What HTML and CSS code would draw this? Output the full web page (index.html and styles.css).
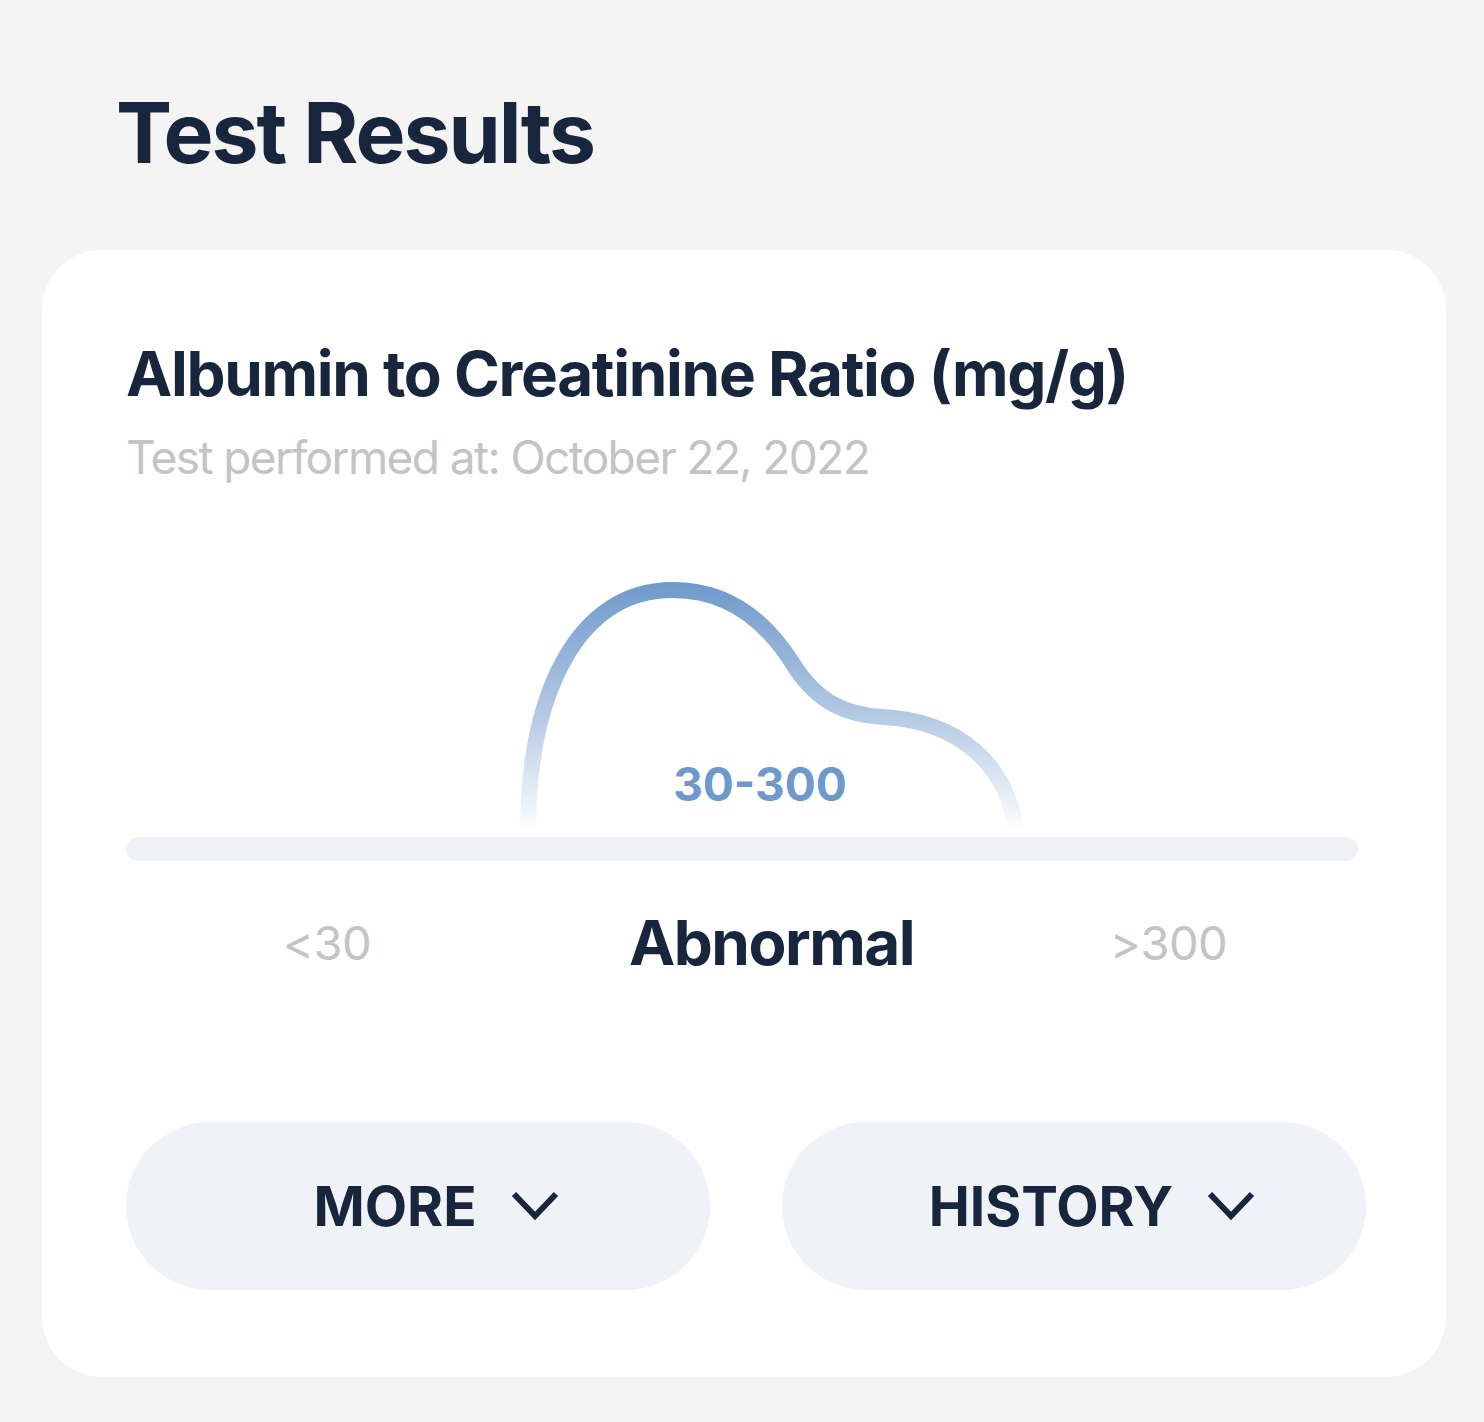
FILE: index.html
```html
<!DOCTYPE html>
<html lang="en">
<head>
    <meta charset="UTF-8">
    <meta name="viewport" content="width=device-width, initial-scale=1.0">
    <link rel="stylesheet" href="styles.css">
</head>
<body>
    <h1 class="page-title">Test Results</h1>

    <section class="result-card">
        <h2 class="test-name">Albumin to Creatinine Ratio (mg/g)</h2>
        <p class="test-date">Test performed at: October 22, 2022</p>

        <div class="gauge">
            <!-- range curve over the track, fades out towards the bottom -->
            <svg class="gauge-curve" width="1232" height="263" viewBox="0 0 1232 263">
                <defs>
                    <linearGradient id="curve-fade" gradientUnits="userSpaceOnUse" x1="0" y1="8" x2="0" y2="258">
                        <stop offset="0" stop-color="#6f99cb"/>
                        <stop offset="0.55" stop-color="#b6cbe5"/>
                        <stop offset="1" stop-color="#ffffff"/>
                    </linearGradient>
                </defs>
                <path d="M402 258 C402 118 452 16 547 16 C604 16 642 50 667 90 C692 130 722 141 757 143 C832 147 882 190 890 258"
                      fill="none" stroke="url(#curve-fade)" stroke-width="16"/>
                <text class="gauge-range" x="634" y="227" text-anchor="middle">30-300</text>
            </svg>
            <div class="gauge-track"></div>
            <div class="gauge-labels">
                <span>&lt;30</span>
                <span class="current">Abnormal</span>
                <span>&gt;300</span>
            </div>
        </div>

        <div class="actions">
            <button class="pill-button">
                MORE
                <svg width="48" height="30" viewBox="0 0 48 30"><path d="M3 3 L24 25 L45 3" fill="none" stroke="#18263d" stroke-width="6"/></svg>
            </button>
            <button class="pill-button">
                HISTORY
                <svg width="48" height="30" viewBox="0 0 48 30"><path d="M3 3 L24 25 L45 3" fill="none" stroke="#18263d" stroke-width="6"/></svg>
            </button>
        </div>
    </section>
</body>
</html>
```

FILE: styles.css
```css
body {
    font-family: 'Inter', 'Noto Sans', sans-serif;
    margin: 0;
    padding: 0;
    background-color: #f4f4f4;
    color: #18263d;
}
.page-title {
    margin: 0;
    padding: 81px 0 0 116px;
    height: 166px;
    box-sizing: border-box;
    font-size: 84px;
    line-height: 104px;
    font-weight: 700;
    letter-spacing: -2px;
}
.result-card {
    background: #ffffff;
    margin-left: 42px;
    width: 1404px;
    box-sizing: border-box;
    padding: 88px 80px 87px 84px;
    border-radius: 60px;
    margin-top: 84px;
}
.test-name {
    margin: 0;
    font-size: 62px;
    line-height: 72px;
    font-weight: 700;
    letter-spacing: -1.3px;
}
.test-date {
    margin: 19px 0 0;
    font-size: 46px;
    line-height: 56px;
    color: #c4c4c4;
    letter-spacing: -1.6px;
}
.gauge {
    margin-top: 89px;
    width: 1232px;
}
.gauge-curve {
    display: block;
}
.gauge-range {
    font-family: 'Inter', sans-serif;
    font-size: 46px;
    font-weight: 700;
    fill: #6f99cb;
}
.gauge-track {
    height: 24px;
    border-radius: 12px;
    background: #eef2f7;
}
.gauge-labels {
    display: grid;
    grid-template-columns: 402px 487px 307px;
    margin-top: 44px;
    height: 70px;
    align-items: center;
    text-align: center;
    font-size: 47px;
    color: #c4c4c4;
    letter-spacing: -0.5px;
}
.gauge-labels .current {
    font-size: 62px;
    font-weight: 700;
    color: #18263d;
    letter-spacing: -1.5px;
}
.actions {
    display: flex;
    gap: 72px;
    margin-top: 147px;
}
.pill-button {
    width: 584px;
    height: 168px;
    border: none;
    border-radius: 84px;
    background: #eff2f7;
    display: flex;
    align-items: center;
    justify-content: center;
    gap: 34px;
    padding: 0 0 0 36px;
    font-family: 'Inter', sans-serif;
    font-size: 55px;
    font-weight: 700;
    color: #18263d;
    cursor: pointer;
}
.pill-button svg {
    margin-top: 0;
}
```
